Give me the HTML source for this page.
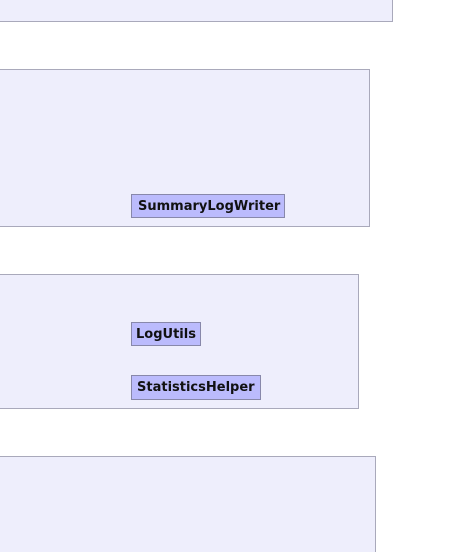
<!DOCTYPE html>
<html style="overflow:hidden;width:462px;height:552px"><head><style>
html,body{margin:0;width:462px;height:552px;overflow:hidden}
body{background:#fff;position:relative;font-family:"DejaVu Sans",sans-serif}
.b{position:absolute;background:#eeeefc;border:1px solid #a9a9bb;box-sizing:border-box}
.l{position:absolute;background:#bbbbfc;border:1px solid #8888aa;box-sizing:border-box;font-weight:bold;font-size:13px;color:#111;line-height:23px;padding-left:5px;white-space:nowrap}
</style></head><body>
<div class="b" style="left:-2px;top:-2px;width:395px;height:24px"></div>
<div class="b" style="left:-2px;top:69px;width:372px;height:158px"></div>
<div class="b" style="left:-2px;top:274px;width:361px;height:135px"></div>
<div class="b" style="left:-2px;top:456px;width:378px;height:96px;border-bottom:none"></div>
<div class="l" style="left:131px;top:194px;width:154px;height:24px;padding-left:6px">SummaryLogWriter</div>
<div class="l" style="left:131px;top:322px;width:70px;height:24px;padding-left:4px">LogUtils</div>
<div class="l" style="left:131px;top:375px;width:130px;height:25px;padding-left:5px">StatisticsHelper</div>
</body></html>
